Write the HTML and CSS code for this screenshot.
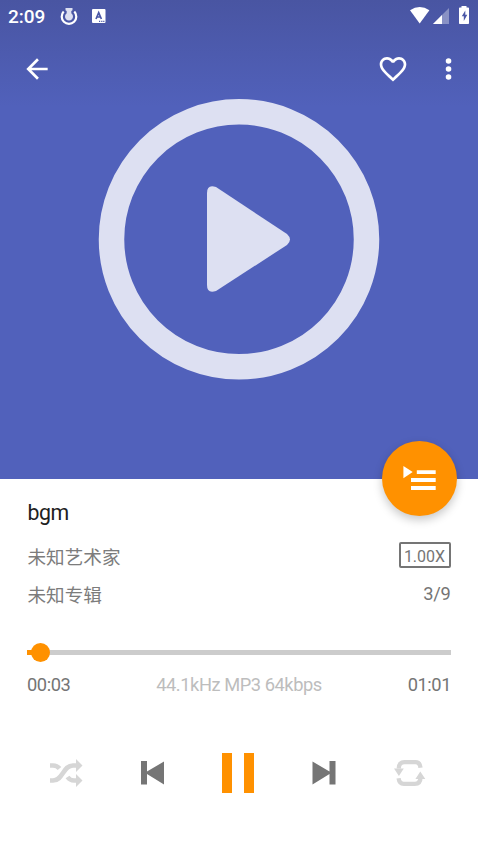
FILE: index.html
```html
<!DOCTYPE html>
<html lang="zh-CN">
<head>
<meta charset="utf-8">
<title>bgm</title>
<link rel="stylesheet" href="styles.css">
</head>
<body>
<main class="player">
  <section class="cover">
    <div class="status">
      <span class="clock">2:09</span>
      <svg class="ring-icon" width="18" height="18" viewBox="0 0 18 18"><path d="M3.700 3.500A7.300 7.300 0 1 0 14.300 3.500" fill="none" stroke="#fff" stroke-width="2.200"/><path d="M5.500 0h7v2.200l-1.200.8v2.200a4 4 0 1 1-4.600 0V3l-1.200-.8z" fill="#dcdff1"/></svg>
      <svg class="a-icon" width="14" height="14" viewBox="0 0 14 14"><rect width="13.500" height="14" rx="1" fill="#fff"/><path d="M4 10 6.700 3.700 9.400 10M5 8h3.500" fill="none" stroke="#4b58a7" stroke-width="1.700"/><path d="M7 12.400h1.200M9.200 12.400h1.200M11.200 12.400h1.200" stroke="#4b58a7" stroke-width="1.200"/></svg>
      <svg class="system" width="59" height="18" viewBox="0 0 59 18"><path d="M0 4.200Q9.700-2.400 19.400 4.200L9.700 17.500z" fill="#fff"/><path d="M39 2v16H23z" fill="#fff" opacity=".35"/><path d="M32 9v9h-9z" fill="#fff"/><path d="M51.500 0h5v1.500h1.700q.8 0 .8.800v14.900q0 .8-.8.800h-8.400q-.8 0-.8-.8V2.300q0-.8.800-.8h1.700z" fill="#fff"/><path d="M55.300 4.500 51.800 10.300h2v4.800l3.500-6.300h-2z" fill="#4b58a7"/></svg>
    </div>
    <nav class="toolbar">
      <svg width="32" height="32" viewBox="0 0 24 24"><path d="M20 11H7.830l5.590-5.590L12 4l-8 8 8 8 1.410-1.410L7.830 13H20z"/></svg>
      <svg class="heart" width="32" height="32" viewBox="0 0 24 24"><path d="M16.500 3c-1.740 0-3.410.81-4.500 2.090C10.910 3.810 9.240 3 7.500 3 4.420 3 2 5.420 2 8.500c0 3.780 3.400 6.860 8.550 11.540L12 21.350l1.450-1.320C18.600 15.360 22 12.280 22 8.500 22 5.420 19.580 3 16.500 3zm-4.400 15.550-.1.100-.1-.1C7.140 14.240 4 11.390 4 8.500 4 6.500 5.500 5 7.500 5c1.540 0 3.040.99 3.570 2.360h1.870C13.460 5.990 14.960 5 16.500 5c2 0 3.500 1.500 3.500 3.500 0 2.890-3.140 5.740-7.900 10.050z"/></svg>
      <svg width="32" height="32" viewBox="0 0 24 24"><circle cx="12.400" cy="6" r="2.100"/><circle cx="12.400" cy="12" r="2.100"/><circle cx="12.400" cy="18" r="2.100"/></svg>
    </nav>
    <svg class="artwork" width="282" height="282" viewBox="0 0 282 282"><circle cx="141" cy="141.300" r="127.500" fill="none" stroke="#dde0f2" stroke-width="25.500"/><path d="M109 95v92q0 9 9 6L189 147q6-5.500 0-11L118 89q-9-3-9 6z" fill="#dde0f2"/></svg>
    <button class="queue" aria-label="播放队列"><svg width="34" height="26" viewBox="0 0 34 26"><path d="M.4 0 9.700 6 .4 12.200zM13.800 4.200H32.700V8H13.800zM8 12h24.700v3.900H8zM8 20h24.700v3.900H8z" fill="#fff"/></svg></button>
  </section>
  <section class="info">
    <h1>bgm</h1>
    <div class="row artist"><span>未知艺术家</span><span class="speed">1.00X</span></div>
    <div class="row album"><span>未知专辑</span><span class="position">3/9</span></div>
  </section>
  <section class="progress">
    <div class="track"><div class="played"></div><div class="thumb"></div></div>
    <div class="times"><span>00:03</span><span class="format">44.1kHz MP3 64kbps</span><span>01:01</span></div>
  </section>
  <section class="controls">
    <svg width="33" height="28" viewBox="0 0 33 28"><g fill="none" stroke="#d6d6d6" stroke-width="4.700"><path d="M0 21.500h3C13 21.500 13 6.500 23 6.500h4"/><path d="M0 6.500h3q4 0 6.500 3"/><path d="M17.500 18q2.500 3.500 6.500 3.500h3"/></g><path d="M26 0 32.500 6.500 26 13zM26 15 32.500 21.500 26 28z" fill="#d6d6d6"/></svg>
    <svg width="24" height="24" viewBox="0 0 24 24"><path d="M0 0h6v10.500L23 .5v23L6 13v10.500H0z" fill="#757575"/></svg>
    <svg width="32" height="40" viewBox="0 0 32 40"><path d="M0 0h10v40H0zM22 0h10v40H22z" fill="#ff9100"/></svg>
    <svg width="24" height="24" viewBox="0 0 24 24"><path d="M23.500 0h-6v10.500L.5.500v23l17-10.500v10.500h6z" fill="#757575"/></svg>
    <svg width="32" height="28" viewBox="0 0 32 28"><g fill="none" stroke="#d6d6d6" stroke-width="4.300"><path d="M4.800 9.500Q4.800 3.200 10.500 3.200h11Q26 3.200 26.500 8.800"/><path d="M26.500 18.500q0 6.300-5.700 6.300h-11Q5.300 24.800 4.600 19.200"/></g><path d="M0 9.500h9.800L4.900 17zM21.400 20h9.900l-5-7.500z" fill="#d6d6d6"/></svg>
  </section>
</main>
</body>
</html>
```
FILE: styles.css
```css
* { box-sizing: border-box; }
body { margin: 0; background: #fff; }
svg { display: block; flex: none; }
.player {
  width: 478px;
  height: 851px;
  overflow: hidden;
  font-family: Roboto, "Noto Sans CJK SC", sans-serif;
  font-size: 18.300px;
  color: #757575;
}
.cover {
  position: relative;
  height: 478.500px;
  background: linear-gradient(#4955a2, #5161bb 107px);
}
.status {
  display: flex;
  align-items: flex-start;
  height: 53px;
  padding: 6px 9px 0 8px;
}
.clock {
  font-size: 19px;
  font-weight: 500;
  line-height: 22px;
  width: 52px;
  color: #fff;
}
.ring-icon { margin-top: 2px; }
.a-icon { margin: 3px 0 0 14px; }
.system { margin-left: auto; }
.toolbar {
  display: flex;
  padding: 0 14px 0 21px;
  fill: #fff;
}
.heart { margin: 0 23.500px 0 auto; }
.artwork { margin: 13px auto 0; }
.queue {
  position: absolute;
  right: 21px;
  bottom: -37.500px;
  width: 75px;
  height: 75px;
  padding: 0 0 0 21px;
  border: 0;
  border-radius: 50%;
  background: #ff9100;
  box-shadow: 0 4px 10px rgba(0, 0, 0, .22);
}
.info { padding: 20px 27.500px 0; }
h1 {
  margin: 0;
  font-size: 21.300px;
  font-weight: 400;
  line-height: 27px;
  letter-spacing: -.4px;
  color: #212121;
}
.row {
  display: flex;
  align-items: center;
  justify-content: space-between;
  height: 38px;
}
.row span:first-child { padding-top: 2px; font-size: 18.600px; color: #7c7c7c; }
.artist { margin-top: 10px; }
.speed {
  width: 52px;
  height: 26px;
  border: 2px solid #757575;
  border-radius: 2px;
  font-size: 16px;
  line-height: 25px;
  text-align: center;
}
.position { padding-top: 2px; letter-spacing: -.3px; }
.progress { padding: 38px 27px 0; }
.track {
  position: relative;
  height: 5px;
  background: #ccc;
}
.played { width: 13px; height: 5px; background: #ff9100; }
.thumb {
  position: absolute;
  top: -7px;
  left: 4px;
  width: 19px;
  height: 19px;
  border-radius: 50%;
  background: #ff9100;
}
.times {
  display: flex;
  justify-content: space-between;
  margin-top: 19px;
  line-height: 22px;
  letter-spacing: -.450px;
}
.format { color: #bdbdbd; }
.controls {
  display: flex;
  align-items: center;
  justify-content: space-between;
  margin-top: 57px;
  padding: 0 52.500px 0 50px;
}
```
